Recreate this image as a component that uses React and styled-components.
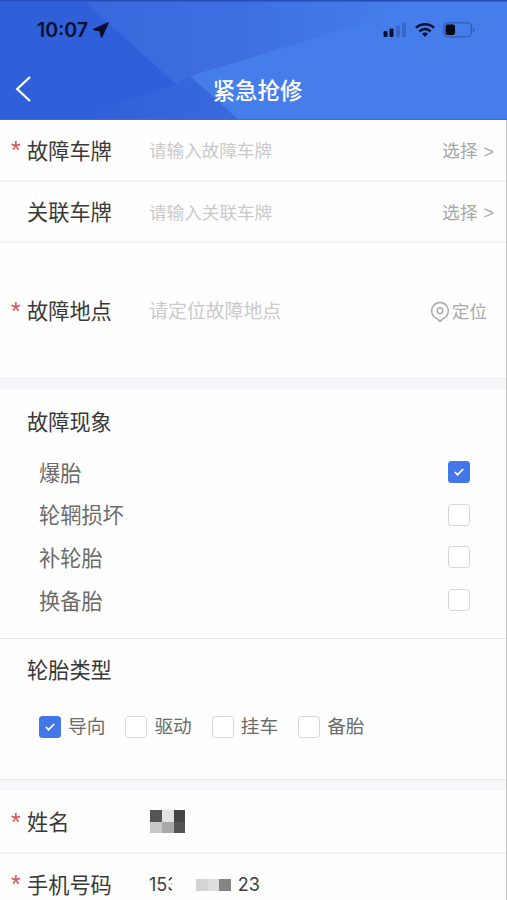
import React, { useState } from "react";
import styled, { createGlobalStyle } from "styled-components";

const GlobalStyle = createGlobalStyle`
  * {
    box-sizing: border-box;
  }
  body {
    margin: 0;
    background: #fff;
    font-family: "Liberation Sans", "Noto Sans CJK SC", sans-serif;
  }
`;

const Page = styled.div`
  display: flex;
  flex-direction: column;
  width: 507px;
  height: 900px;
  overflow: hidden;
  background: #fefefe;
`;

const Header = styled.header`
  position: relative;
  flex: none;
  height: 120px;
  border-top: 1px solid #2450b8;
  border-bottom: 1px solid #3c6dcd;
  background: #305fda;
`;

const HeaderArt = styled.svg`
  position: absolute;
  inset: 0;
  width: 100%;
  height: 100%;
`;

const StatusBar = styled.div`
  position: relative;
  display: flex;
  align-items: center;
  height: 58px;
  padding: 0 32px 0 37px;
  color: #06102c;
`;

const Clock = styled.span`
  font-family: Inter, sans-serif;
  font-size: 19.5px;
  font-weight: 600;
  line-height: 24px;
`;

const LocationArrow = styled.svg`
  margin-left: 5px;
`;

const StatusIcons = styled.div`
  display: flex;
  align-items: center;
  gap: 8px;
  margin-left: auto;
`;

const TitleBar = styled.div`
  position: relative;
  display: grid;
  grid-template-columns: 60px 1fr 52px;
  align-items: center;
  height: 60px;
`;

const BackButton = styled.button`
  display: flex;
  width: 40px;
  padding: 0 0 0 15px;
  border: 0;
  background: none;
`;

const Title = styled.h1`
  margin: 0;
  padding-top: 6px;
  color: #fff;
  font-size: 22.4px;
  font-weight: 500;
  line-height: 30px;
  text-align: center;
`;

const Body = styled.main`
  flex: 1;
  min-height: 0;
  overflow: hidden;
  border-right: 1px solid #bfbfc2;
`;

const Row = styled.div`
  display: grid;
  grid-template-columns: 27px 122px 1fr auto;
  align-items: center;
  height: ${(p) => p.$height}px;
  padding-right: ${(p) => p.$right || 12}px;
  border-bottom: ${(p) => (p.$last ? "0" : "2px solid #f3f3f4")};
`;

const Star = styled.span`
  padding: 0 0 0 11px;
  color: #d9544f;
  font-size: 25px;
  line-height: 24px;
`;

const Label = styled.span`
  padding-top: 3px;
  color: #383838;
  font-size: 21.2px;
  line-height: 30px;
  white-space: nowrap;
`;

const Placeholder = styled.span`
  padding-top: 2px;
  color: #cacaca;
  font-size: ${(p) => p.$size || 17.6}px;
  line-height: 26px;
`;

const Action = styled.span`
  display: flex;
  align-items: center;
  padding-top: 2px;
  color: #a8a8a8;
  font-size: 17.6px;
  line-height: 26px;
`;

const Arrow = styled.span`
  margin-left: 6px;
  padding-top: 1px;
  font-size: 18px;
`;

const Gap = styled.div`
  height: ${(p) => p.$height}px;
  border-top: 1px solid #ececee;
  background: #f7f7f9;
`;

const Section = styled.section`
  height: ${(p) => p.$height}px;
  padding: ${(p) => p.$top}px 36px 0 27px;
  border-bottom: ${(p) => (p.$line ? "1px solid #e6e6e6" : "0")};
`;

const SectionTitle = styled.h2`
  margin: 0;
  color: #383838;
  font-size: 21.2px;
  font-weight: 400;
  line-height: 30px;
`;

const FaultList = styled.div`
  display: flex;
  flex-direction: column;
  padding: 13px 0 0 12px;
`;

const FaultItem = styled.label`
  display: flex;
  align-items: center;
  justify-content: space-between;
  height: 42.6px;
  color: #6b6b6b;
  font-size: 21.2px;
  line-height: 30px;
`;

const FaultName = styled.span`
  padding-top: 3px;
`;

const TypeList = styled.div`
  display: flex;
  gap: 20px;
  padding: 26px 0 0 12px;
`;

const TypeItem = styled.label`
  display: flex;
  align-items: center;
  gap: 7px;
  width: 66.4px;
  color: #6b6b6b;
  font-size: 18.7px;
  line-height: 28px;
  white-space: nowrap;
`;

const TypeName = styled.span`
  padding-top: 1px;
`;

const Box = styled.span`
  display: flex;
  flex: none;
  align-items: center;
  justify-content: center;
  width: 22px;
  height: 22px;
  border: ${(p) => (p.$checked ? "0" : "1.5px solid #d6d6d6")};
  border-radius: 3.5px;
  background: ${(p) => (p.$checked ? "#4376e8" : "#fff")};
`;

const Mosaic = styled.div`
  display: grid;
  grid-template-columns: repeat(3, ${(p) => p.$width}px);
  grid-auto-rows: ${(p) => p.$height}px;
  padding: 0 0 0 1px;
`;

const MosaicCell = styled.span`
  background: ${(p) => p.$color};
`;

const Phone = styled.span`
  display: flex;
  align-items: center;
  padding-top: 2px;
  color: #3c3c3c;
  font-family: Inter, sans-serif;
  font-size: 18px;
  line-height: 26px;
`;

const PhoneHead = styled.span`
  position: relative;
  width: 46px;

  &::after {
    position: absolute;
    top: 0;
    left: 23px;
    width: 20px;
    height: 26px;
    background: #fefefe;
    content: "";
  }
`;

const PhoneTail = styled.span`
  margin-left: 7px;
`;

const faults = ["爆胎", "轮辋损坏", "补轮胎", "换备胎"];
const types = ["导向", "驱动", "挂车", "备胎"];
const nameCells = ["#555", "#e2e2e2", "#454545", "#c8c8c8", "#a9a9a9", "#545454"];
const phoneCells = ["#d4d4d4", "#dedede", "#858585"];

const Checkbox = ({ checked }) => (
  <Box $checked={checked}>
    {checked && (
      <svg width="12" height="10" viewBox="0 0 12 10" fill="none">
        <path d="M1.8 5 4.6 7.7 10.2 2" stroke="#fff" strokeWidth="1.7" />
      </svg>
    )}
  </Box>
);

const Pin = () => (
  <svg width="20" height="22" viewBox="0 0 20 22" fill="none" stroke="#a8a8a8" strokeWidth="1.4">
    <path d="M6.2 17.2A8.3 8.3 0 1 1 13.8 17.2L10 20.4Z" strokeLinejoin="round" />
    <circle cx="10" cy="9.8" r="2.8" />
  </svg>
);

const App = () => {
  const [fault, setFault] = useState([0]);
  const [type, setType] = useState([0]);

  const toggle = (list, value) =>
    list.includes(value) ? list.filter((v) => v !== value) : [...list, value];

  return (
    <Page>
      <GlobalStyle />
      <Header>
        <HeaderArt viewBox="0 0 507 118" preserveAspectRatio="none">
          <defs>
            <linearGradient id="fold" gradientUnits="userSpaceOnUse" x1="80" y1="0" x2="240" y2="0">
              <stop offset="0" stopColor="#305fda" />
              <stop offset="1" stopColor="#3a69dd" />
            </linearGradient>
            <linearGradient id="top" gradientUnits="userSpaceOnUse" x1="84" y1="0" x2="400" y2="0">
              <stop offset="0" stopColor="#3967dd" />
              <stop offset="0.5" stopColor="#3e6fe1" />
              <stop offset="1" stopColor="#457eea" />
            </linearGradient>
          </defs>
          <path d="M60 118 177 84 190 74 242 118Z" fill="url(#fold)" />
          <path d="M84 0H507V60L190 75 177 84Z" fill="url(#top)" />
          <path d="M177 84 190 74 200 84Z" fill="#3867dc" />
          <path d="M190 75 253 56 370 20 420 0H507V118H238Z" fill="#457eea" />
          <rect width="507" height="1" fill="#2d5dcc" />
        </HeaderArt>
        <StatusBar>
          <Clock>10:07</Clock>
          <LocationArrow width="16" height="16" viewBox="0 0 16 16">
            <path
              d="M15 1 1 7.4 7.2 8.8 8.6 15Z"
              fill="#06102c"
              stroke="#06102c"
              strokeWidth="1.6"
              strokeLinejoin="round"
            />
          </LocationArrow>
          <StatusIcons>
            <svg width="24" height="16" viewBox="0 0 24 16">
              <rect x="0.5" y="9" width="4" height="6" rx="1" fill="#06102c" />
              <rect x="6.5" y="6.5" width="4" height="8.5" rx="1" fill="#06102c" />
              <rect x="13" y="3.5" width="4" height="11.5" rx="1" fill="#3865c8" />
              <rect x="19" y="0.5" width="4" height="14.5" rx="1" fill="#3865c8" />
            </svg>
            <svg width="20" height="16" viewBox="0 0 20 16" fill="none" stroke="#06102c">
              <path d="M1 5.8a13 13 0 0 1 18 0" strokeWidth="2.6" />
              <path d="M4.4 9.3a8.1 8.1 0 0 1 11.2 0" strokeWidth="2.4" />
              <path d="M7 11.8a4.4 4.4 0 0 1 6 0L10 15Z" fill="#06102c" stroke="none" />
            </svg>
            <svg width="32" height="16" viewBox="0 0 32 16">
              <rect x="0.8" y="0.8" width="27.6" height="14" rx="4" fill="none" stroke="#315caf" strokeWidth="1.3" />
              <rect x="2.6" y="2.6" width="9.4" height="10.4" rx="2" fill="#030817" />
              <path d="M30 5.4c2 1 2 3.8 0 4.8Z" fill="#315caf" />
            </svg>
          </StatusIcons>
        </StatusBar>
        <TitleBar>
          <BackButton aria-label="返回">
            <svg width="17" height="28" viewBox="0 0 17 28" fill="none">
              <path d="M15 2 2.2 14 15 26" stroke="#fff" strokeWidth="2.3" />
            </svg>
          </BackButton>
          <Title>紧急抢修</Title>
        </TitleBar>
      </Header>

      <Body>
        <Row $height={62}>
          <Star>*</Star>
          <Label>故障车牌</Label>
          <Placeholder>请输入故障车牌</Placeholder>
          <Action>
            选择<Arrow>&gt;</Arrow>
          </Action>
        </Row>
        <Row $height={61}>
          <span />
          <Label>关联车牌</Label>
          <Placeholder>请输入关联车牌</Placeholder>
          <Action>
            选择<Arrow>&gt;</Arrow>
          </Action>
        </Row>
        <Row $height={135} $right={19} $last>
          <Star>*</Star>
          <Label>故障地点</Label>
          <Placeholder $size={18.9}>请定位故障地点</Placeholder>
          <Action>
            <Pin />
            <span style={{ marginLeft: 2 }}>定位</span>
          </Action>
        </Row>
        <Gap $height={12} />
        <Section $height={249} $top={18} $line>
          <SectionTitle>故障现象</SectionTitle>
          <FaultList>
            {faults.map((name, i) => (
              <FaultItem key={name} onClick={() => setFault(toggle(fault, i))}>
                <FaultName>{name}</FaultName>
                <Checkbox checked={fault.includes(i)} />
              </FaultItem>
            ))}
          </FaultList>
        </Section>
        <Section $height={140} $top={17}>
          <SectionTitle>轮胎类型</SectionTitle>
          <TypeList>
            {types.map((name, i) => (
              <TypeItem key={name} onClick={() => setType(toggle(type, i))}>
                <Checkbox checked={type.includes(i)} />
                <TypeName>{name}</TypeName>
              </TypeItem>
            ))}
          </TypeList>
        </Section>
        <Gap $height={12} />
        <Row $height={63}>
          <Star>*</Star>
          <Label>姓名</Label>
          <Mosaic $width={11.8} $height={11.8}>
            {nameCells.map((color, i) => (
              <MosaicCell key={i} $color={color} />
            ))}
          </Mosaic>
        </Row>
        <Row $height={62}>
          <Star>*</Star>
          <Label>手机号码</Label>
          <Phone>
            <PhoneHead>153</PhoneHead>
            <Mosaic $width={11.6} $height={11.6}>
              {phoneCells.map((color, i) => (
                <MosaicCell key={i} $color={color} />
              ))}
            </Mosaic>
            <PhoneTail>23</PhoneTail>
          </Phone>
        </Row>
      </Body>
    </Page>
  );
};

export default App;
